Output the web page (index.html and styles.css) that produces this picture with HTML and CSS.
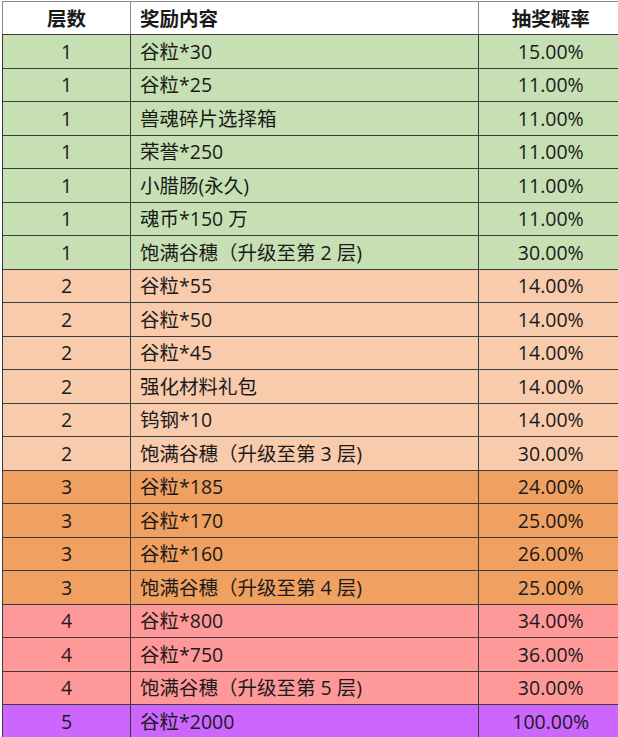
FILE: index.html
```html
<!DOCTYPE html>
<html lang="zh-CN">
<head>
<meta charset="utf-8">
<title>抽奖概率</title>
<link rel="stylesheet" href="styles.css">
</head>
<body>
<div class="wrap">
<table class="prize">
<colgroup><col class="c1"><col class="c2"><col class="c3"></colgroup>
<thead>
<tr><th class="num">层数</th><th class="name">奖励内容</th><th class="num">抽奖概率</th></tr>
</thead>
<tbody>
<tr class="l1"><td class="num">1</td><td>谷粒*30</td><td class="num">15.00%</td></tr>
<tr class="l1"><td class="num">1</td><td>谷粒*25</td><td class="num">11.00%</td></tr>
<tr class="l1"><td class="num">1</td><td>兽魂碎片选择箱</td><td class="num">11.00%</td></tr>
<tr class="l1"><td class="num">1</td><td>荣誉*250</td><td class="num">11.00%</td></tr>
<tr class="l1"><td class="num">1</td><td>小腊肠(永久)</td><td class="num">11.00%</td></tr>
<tr class="l1"><td class="num">1</td><td>魂币*150 万</td><td class="num">11.00%</td></tr>
<tr class="l1"><td class="num">1</td><td>饱满谷穗（升级至第 2 层)</td><td class="num">30.00%</td></tr>
<tr class="l2"><td class="num">2</td><td>谷粒*55</td><td class="num">14.00%</td></tr>
<tr class="l2"><td class="num">2</td><td>谷粒*50</td><td class="num">14.00%</td></tr>
<tr class="l2"><td class="num">2</td><td>谷粒*45</td><td class="num">14.00%</td></tr>
<tr class="l2"><td class="num">2</td><td>强化材料礼包</td><td class="num">14.00%</td></tr>
<tr class="l2"><td class="num">2</td><td>钨钢*10</td><td class="num">14.00%</td></tr>
<tr class="l2"><td class="num">2</td><td>饱满谷穗（升级至第 3 层)</td><td class="num">30.00%</td></tr>
<tr class="l3"><td class="num">3</td><td>谷粒*185</td><td class="num">24.00%</td></tr>
<tr class="l3"><td class="num">3</td><td>谷粒*170</td><td class="num">25.00%</td></tr>
<tr class="l3"><td class="num">3</td><td>谷粒*160</td><td class="num">26.00%</td></tr>
<tr class="l3"><td class="num">3</td><td>饱满谷穗（升级至第 4 层)</td><td class="num">25.00%</td></tr>
<tr class="l4"><td class="num">4</td><td>谷粒*800</td><td class="num">34.00%</td></tr>
<tr class="l4"><td class="num">4</td><td>谷粒*750</td><td class="num">36.00%</td></tr>
<tr class="l4"><td class="num">4</td><td>饱满谷穗（升级至第 5 层)</td><td class="num">30.00%</td></tr>
<tr class="l5"><td class="num">5</td><td>谷粒*2000</td><td class="num">100.00%</td></tr>
</tbody>
</table>
</div>
</body>
</html>
```

FILE: styles.css
```css
html, body {
  margin: 0;
  padding: 0;
  background: #ffffff;
}
.wrap {
  padding: 1px 0 0 2px;
  width: 618px;
  height: 737px;
  overflow: hidden;
  box-sizing: border-box;
}
.prize {
  border-collapse: collapse;
  table-layout: fixed;
  width: 620px;
  font-family: "Open Sans", "Noto Sans CJK SC", sans-serif;
  font-size: 19.5px;
  color: #1a1a1a;
}
.c1 { width: 128px; }
.c2 { width: 348px; }
.c3 { width: 144px; }
.prize th, .prize td {
  height: 33.5px;
  padding: 0 0 0 9px;
  box-sizing: border-box;
  line-height: 1;
  text-align: left;
  border: 1px solid #3b3b3b;
  white-space: nowrap;
}
.prize th {
  height: 33px;
  font-weight: 700;
  background: #ffffff;
  border-color: #8a8a8a;
  border-bottom-color: #3b3b3b;
  font-family: "Noto Sans CJK SC", sans-serif;
  font-size: 19.5px;
}
.prize th.num, .prize td.num {
  text-align: center;
  padding: 0;
}
.prize th:last-child, .prize td:last-child { border-right: none; }
.l1 td { background: #c6e0b4; }
.l2 td { background: #f8cbad; }
.l3 td { background: #f0a060; }
.l4 td { background: #ff9999; }
.l5 td { background: #cc66ff; }
```
